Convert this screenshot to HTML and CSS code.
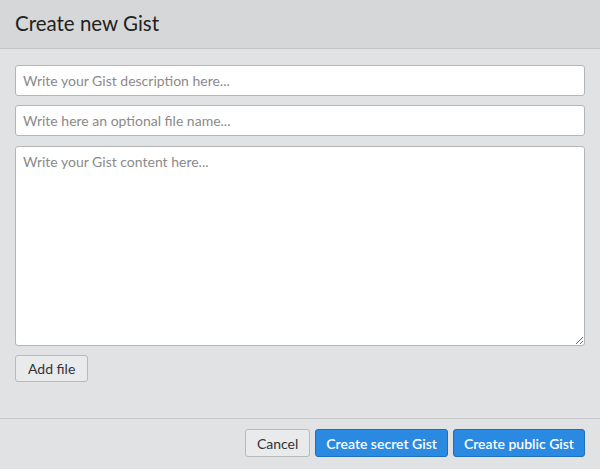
FILE: index.html
```html
<!DOCTYPE html>
<html>
<head>
<meta charset="utf-8">
<link rel="stylesheet" href="styles.css">
</head>
<body>
<div class="modal">
  <div class="header"><h1 class="title">Create new Gist</h1></div>
  <div class="body">
    <input class="field" type="text" placeholder="Write your Gist description here...">
    <input class="field second" type="text" placeholder="Write here an optional file name...">
    <textarea class="field area" placeholder="Write your Gist content here..."></textarea>
    <div class="row"><button class="btn">Add file</button></div>
  </div>
  <div class="footer">
    <button class="btn">Cancel</button>
    <button class="btn primary">Create secret Gist</button>
    <button class="btn primary">Create public Gist</button>
  </div>
</div>
</body>
</html>
```
FILE: styles.css
```css
html, body { margin: 0; padding: 0; }
body { background: #e1e2e4; font-family: Lato, "Noto Sans", sans-serif; width: 600px; height: 469px; overflow: hidden; }
.modal { display: flex; flex-direction: column; height: 469px; }
.header { background: #d6d7d9; border-bottom: 1px solid #c4c5c7; height: 49px; box-sizing: border-box; display: flex; align-items: center; padding: 0 15px 2px; }
.title { margin: 0; font-size: 20.5px; font-weight: 400; color: #222; }
.body { padding: 16px 15px 0; display: flex; flex-direction: column; height: 370px; box-sizing: border-box; border-bottom: 1px solid #c8c9cb; }
.field { box-sizing: border-box; width: 570px; height: 31px; border: 1px solid #b4b5b7; border-radius: 3px; background: #fff; font-family: inherit; font-size: 14px; padding: 0 7px; color: #333; margin: 0 0 9px; }
.field.second { margin-bottom: 10px; }
.field::placeholder { color: #8a8a8a; }
.area { height: 200px; padding: 6px 7px; resize: vertical; }
.row { display: flex; }
.btn { box-sizing: border-box; height: 27px; padding: 0 12px; border: 1px solid #b8b9bb; border-radius: 3px; background: #e9eaec; font-family: inherit; font-size: 14px; color: #333; margin: 0; }
.footer { display: flex; justify-content: flex-end; gap: 5px; padding: 10px 15px 0; }
.footer .btn { height: 28px; padding: 0 11px; }
.footer .primary { padding: 0 10px; }
.primary { background: #2a8ae2; border-color: #1e6fba; color: #fff; font-weight: 600; }
```
